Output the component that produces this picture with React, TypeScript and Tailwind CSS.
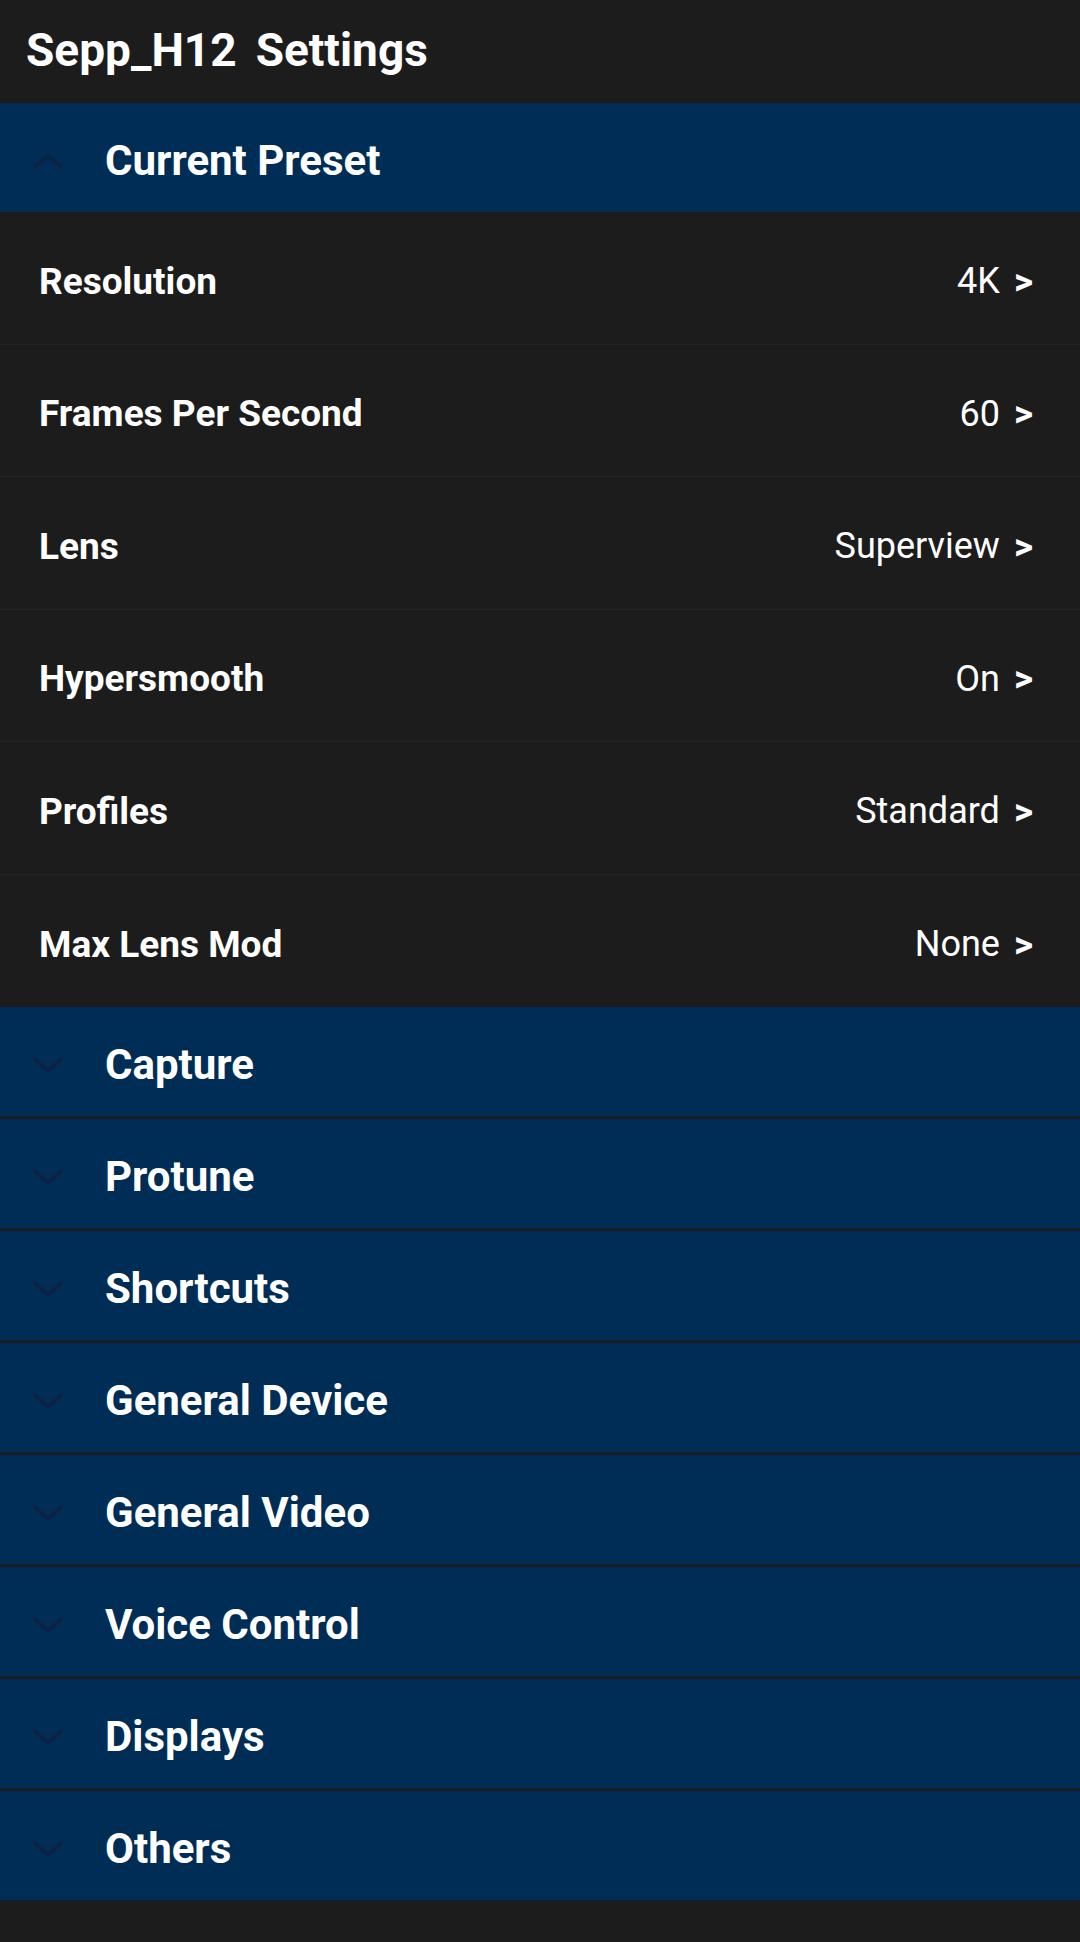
import React from 'react';

const presetRows = [
  { label: 'Resolution', value: '4K' },
  { label: 'Frames Per Second', value: '60' },
  { label: 'Lens', value: 'Superview' },
  { label: 'Hypersmooth', value: 'On' },
  { label: 'Profiles', value: 'Standard' },
  { label: 'Max Lens Mod', value: 'None' },
];

const sections = [
  'Capture',
  'Protune',
  'Shortcuts',
  'General Device',
  'General Video',
  'Voice Control',
  'Displays',
  'Others',
];

function Chevron({ up }: { up?: boolean }) {
  return (
    <svg width="32" height="18" viewBox="0 0 32 18" className="shrink-0">
      <path
        d={up ? 'M3 15 L16 3 L29 15' : 'M3 3 L16 15 L29 3'}
        fill="none"
        stroke="#0c2340"
        strokeWidth="3.5"
        strokeLinecap="round"
        strokeLinejoin="round"
      />
    </svg>
  );
}

function SectionHeader({ title, up }: { title: string; up?: boolean }) {
  return (
    <div className="flex items-center h-[109px] bg-[#002d55] pl-[32px] pt-[6px]">
      <Chevron up={up} />
      <span className="ml-[41px] text-[42px] font-bold text-white leading-none">{title}</span>
    </div>
  );
}

export default function App() {
  return (
    <div
      className="min-h-[1942px] w-[1080px] bg-[#1c1c1c] text-white"
      style={{ fontFamily: 'Roboto, "Noto Sans", sans-serif' }}
    >
      <header className="h-[103px] flex items-center pl-[26px] pb-[4px]">
        <h1 className="text-[46px] font-bold leading-none">
          Sepp_H12<span className="ml-[19px]">Settings</span>
        </h1>
      </header>

      <SectionHeader title="Current Preset" up />

      <div>
        {presetRows.map((row, i) => (
          <div
            key={row.label}
            className={`flex items-center justify-between h-[132.5px] pl-[39px] pr-[47px] pt-[7px] ${
              i < presetRows.length - 1 ? 'border-b border-[#242424]' : ''
            }`}
          >
            <span className="text-[37px] font-bold leading-none">{row.label}</span>
            <span className="flex items-center text-[36px] leading-none">
              {row.value}
              <span className="ml-[14px] text-[37px] font-bold">&gt;</span>
            </span>
          </div>
        ))}
      </div>

      <div>
        {sections.map((s) => (
          <div key={s} className="border-b-[3px] border-[#1a1d22]">
            <SectionHeader title={s} />
          </div>
        ))}
      </div>
    </div>
  );
}
